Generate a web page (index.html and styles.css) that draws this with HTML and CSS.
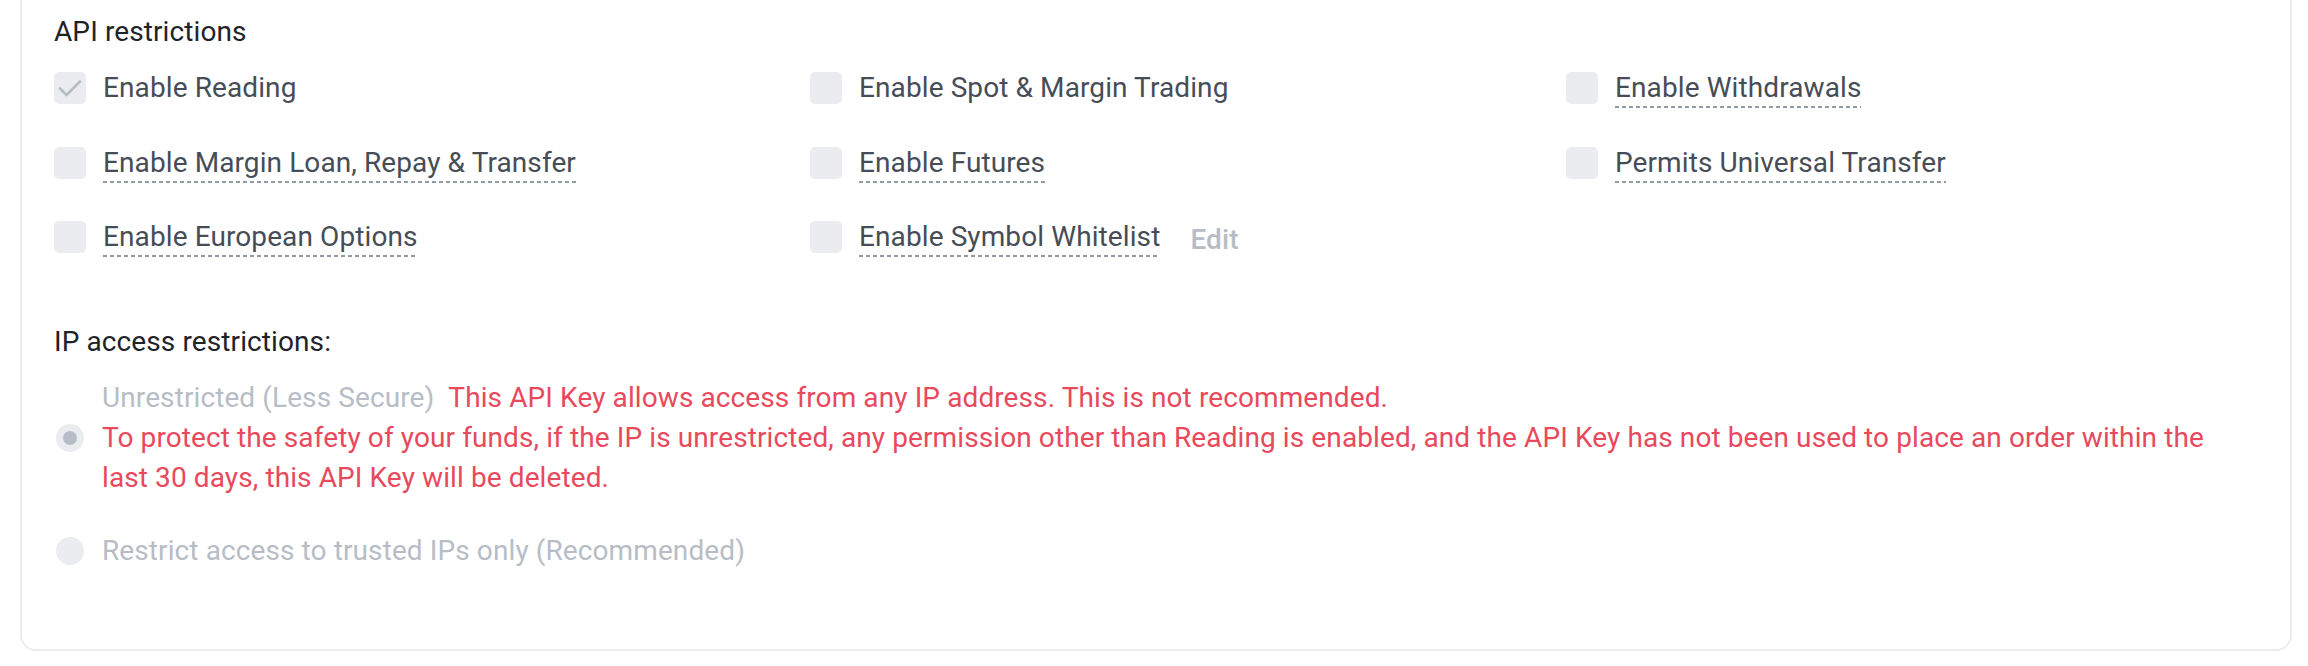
FILE: index.html
```html
<!DOCTYPE html>
<html lang="en">
<head>
<meta charset="utf-8">
<title>API restrictions</title>
<link rel="stylesheet" href="styles.css">
</head>
<body>
<div class="card">
  <div class="section-title">API restrictions</div>
  <div class="perm-grid">
    <div class="perm">
      <span class="check">
        <svg class="tick" viewBox="0 0 32 32" width="32" height="32"><path d="M6 16.5 L12.5 23 L26 9.5" fill="none" stroke="#B7BDC6" stroke-width="2.6" stroke-linecap="round" stroke-linejoin="round"/></svg>
      </span>
      <span class="label">Enable Reading</span>
    </div>
    <div class="perm">
      <span class="check"></span>
      <span class="label">Enable Spot &amp; Margin Trading</span>
    </div>
    <div class="perm">
      <span class="check"></span>
      <span class="label dashed">Enable Withdrawals</span>
    </div>
    <div class="perm">
      <span class="check"></span>
      <span class="label dashed">Enable Margin Loan, Repay &amp; Transfer</span>
    </div>
    <div class="perm">
      <span class="check"></span>
      <span class="label dashed">Enable Futures</span>
    </div>
    <div class="perm">
      <span class="check"></span>
      <span class="label dashed">Permits Universal Transfer</span>
    </div>
    <div class="perm">
      <span class="check"></span>
      <span class="label dashed">Enable European Options</span>
    </div>
    <div class="perm">
      <span class="check"></span>
      <span class="label dashed">Enable Symbol Whitelist</span>
      <span class="edit">Edit</span>
    </div>
  </div>

  <div class="section-title ip-title">IP access restrictions:</div>
  <div class="radio-group">
    <div class="radio-item">
      <span class="radio"><span class="radio-circle selected"><span class="radio-dot"></span></span></span>
      <div class="radio-text">
        <span class="muted">Unrestricted (Less Secure)</span><span class="warn warn-inline">This API Key allows access from any IP address. This is not recommended.</span>
        <div class="warn">To protect the safety of your funds, if the IP is unrestricted, any permission other than Reading is enabled, and the API Key has not been used to place an order within the last 30 days, this API Key will be deleted.</div>
      </div>
    </div>
    <div class="radio-item second">
      <span class="radio"><span class="radio-circle"></span></span>
      <div class="radio-text muted">Restrict access to trusted IPs only (Recommended)</div>
    </div>
  </div>
</div>
</body>
</html>
```

FILE: styles.css
```css
html, body {
  margin: 0;
  padding: 0;
  background: #ffffff;
}

body {
  font-family: Roboto, "Liberation Sans", Arial, sans-serif;
  font-size: 28px;
  line-height: 40px;
  letter-spacing: 0.1px;
  color: #474D57;
  overflow: hidden;
}

.card {
  margin: -38px 16px 0 20px;
  padding: 48px 32px 78px 32px;
  border: 2px solid #EAECEF;
  border-radius: 16px;
  background: #ffffff;
}

.section-title {
  color: #1E2329;
  font-size: 28px;
  line-height: 40px;
}

.perm-grid {
  margin-top: 16px;
  display: grid;
  grid-template-columns: 756px 756px 1fr;
  row-gap: 34.5px;
}

.perm {
  display: flex;
  align-items: center;
  height: 40px;
}

.check {
  flex: 0 0 32px;
  width: 32px;
  height: 32px;
  border-radius: 5px;
  background: #EAECEF;
  margin-right: 17px;
  display: flex;
}

.tick {
  display: block;
}

.label {
  display: inline-block;
  line-height: 40px;
  white-space: nowrap;
  color: #474D57;
}

.label.dashed {
  background-image: linear-gradient(to right, #929AA5 0, #929AA5 4px, transparent 4px, transparent 7px);
  background-size: 7px 2px;
  background-repeat: repeat-x;
  background-position: left bottom;
}

.edit {
  margin-left: 30px;
  margin-top: 6px;
  color: #B7BDC6;
  font-weight: 500;
}

.ip-title {
  margin-top: 65px;
}

.radio-group {
  margin-top: 16px;
  display: flex;
  flex-direction: column;
  gap: 33px;
}

.radio-item {
  display: flex;
  align-items: center;
}

.radio {
  flex: 0 0 32px;
  width: 32px;
  display: flex;
  justify-content: center;
  margin-right: 16px;
}

.radio-circle {
  width: 28px;
  height: 28px;
  border-radius: 50%;
  background: #EAECEF;
  display: flex;
  align-items: center;
  justify-content: center;
}

.radio-dot {
  width: 14px;
  height: 14px;
  border-radius: 50%;
  background: #B7BDC6;
}

.radio-text {
  flex: 1 1 auto;
  min-width: 0;
  max-width: 2140px;
}

.muted {
  color: #B7BDC6;
}

.warn {
  color: #E8495C;
}

.warn-inline {
  margin-left: 14px;
}
```
